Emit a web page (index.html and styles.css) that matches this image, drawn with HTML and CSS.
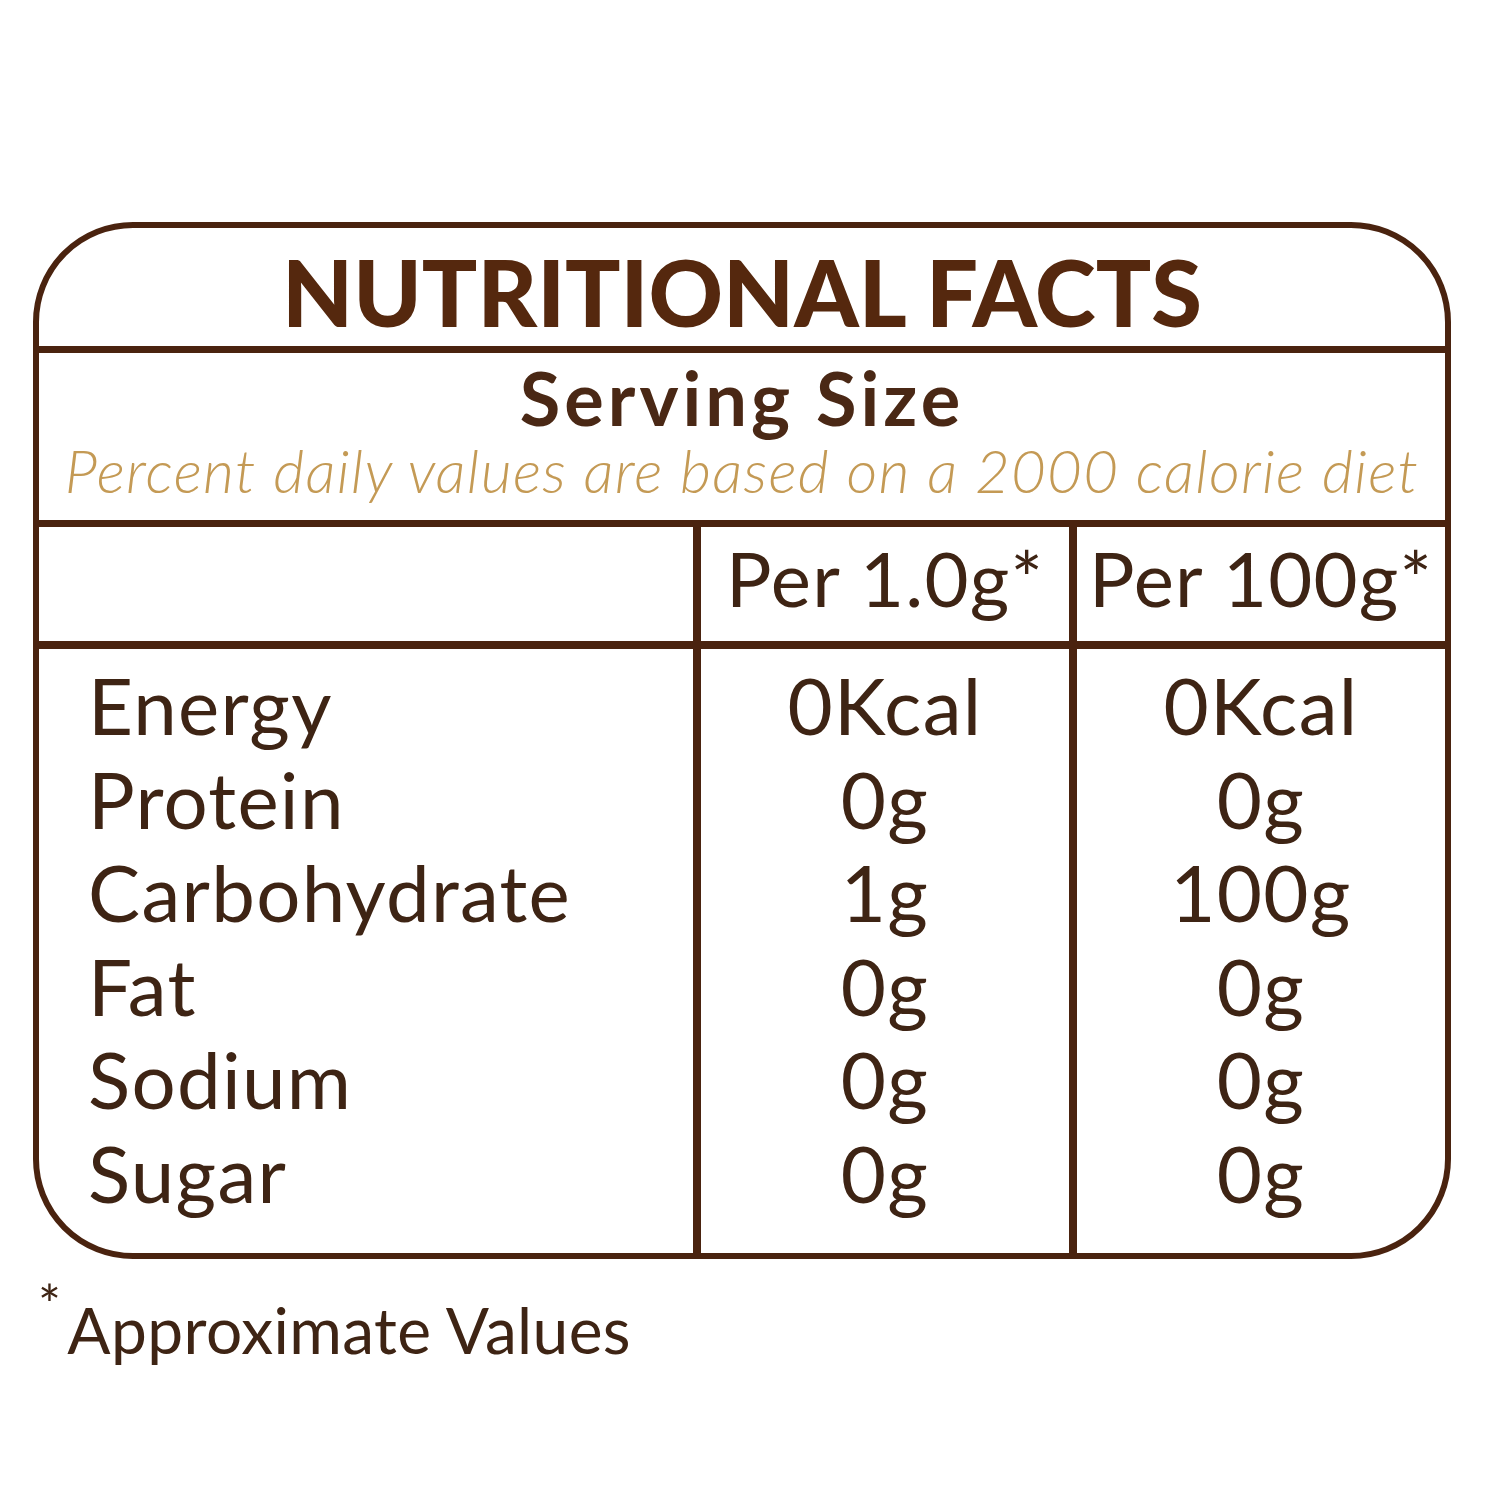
FILE: index.html
```html
<!DOCTYPE html>
<html lang="en">
<head>
  <meta charset="UTF-8">
  <title>Nutritional Facts</title>
  <link rel="stylesheet" href="styles.css">
</head>
<body>
  <div class="page">
    <div class="label">
      <div class="title">NUTRITIONAL FACTS</div>
      <div class="serving">
        <div class="serving-size">Serving Size</div>
        <div class="note">Percent daily values are based on a 2000 calorie diet</div>
      </div>
      <div class="table">
        <div class="head-row">
          <div class="cell name"></div>
          <div class="cell val">Per 1.0g*</div>
          <div class="cell val">Per 100g*</div>
        </div>
        <div class="body-row">
          <div class="cell name">
            <div>Energy</div>
            <div>Protein</div>
            <div>Carbohydrate</div>
            <div>Fat</div>
            <div>Sodium</div>
            <div>Sugar</div>
          </div>
          <div class="cell val">
            <div>0Kcal</div>
            <div>0g</div>
            <div>1g</div>
            <div>0g</div>
            <div>0g</div>
            <div>0g</div>
          </div>
          <div class="cell val">
            <div>0Kcal</div>
            <div>0g</div>
            <div>100g</div>
            <div>0g</div>
            <div>0g</div>
            <div>0g</div>
          </div>
        </div>
      </div>
    </div>
    <div class="footnote"><span class="star">*</span>Approximate Values</div>
  </div>
</body>
</html>
```

FILE: styles.css
```css
/* mise en page de l'etiquette */
body {
  margin: 0;
  background: #fff;
  font-family: Lato, "Noto Sans", sans-serif;
  color: #3e2414;
}

.page {
  padding: 222px 0 0 33px;
}

.label {
  width: 1406px;
  border: 6px solid #4a230f;
  border-radius: 100px;
  overflow: hidden;
}

.title {
  height: 125px;
  border-bottom: 7px solid #4a230f;
  display: flex;
  align-items: center;
  justify-content: center;
  font-weight: 900;
  font-size: 92px;
  color: #55280e;
  padding-top: 8px;
  box-sizing: border-box;
}

.serving {
  height: 174px;
  border-bottom: 7px solid #4a230f;
  box-sizing: border-box;
  text-align: center;
}

.serving-size {
  font-weight: 700;
  font-size: 74px;
  letter-spacing: 4px;
  color: #4a2815;
  line-height: 80px;
  padding-top: 5px;
}

.note {
  font-style: italic;
  font-weight: 300;
  font-size: 60px;
  letter-spacing: 1.3px;
  color: #c49a55;
  line-height: 64px;
}

.head-row,
.body-row {
  display: flex;
}

.head-row {
  height: 122px;
  border-bottom: 8px solid #4a230f;
  box-sizing: border-box;
}

.cell.name {
  width: 654px;
}

.cell.val {
  flex: 1;
  border-left: 8px solid #4a230f;
  text-align: center;
}

.head-row .val {
  font-size: 76px;
  letter-spacing: 1.2px;
  line-height: 102px;
}

.body-row {
  height: 604px;
  font-size: 78px;
  letter-spacing: 1.3px;
  line-height: 93.6px;
}

.body-row .cell {
  padding-top: 10px;
}

.body-row .name {
  padding-left: 49px;
  box-sizing: border-box;
}

.footnote {
  font-size: 64px;
  letter-spacing: 0.4px;
  padding: 12px 0 0 5px;
  color: #3e2414;
}

.star {
  font-size: 54px;
  vertical-align: 30px;
  margin-right: 6px;
}
```
